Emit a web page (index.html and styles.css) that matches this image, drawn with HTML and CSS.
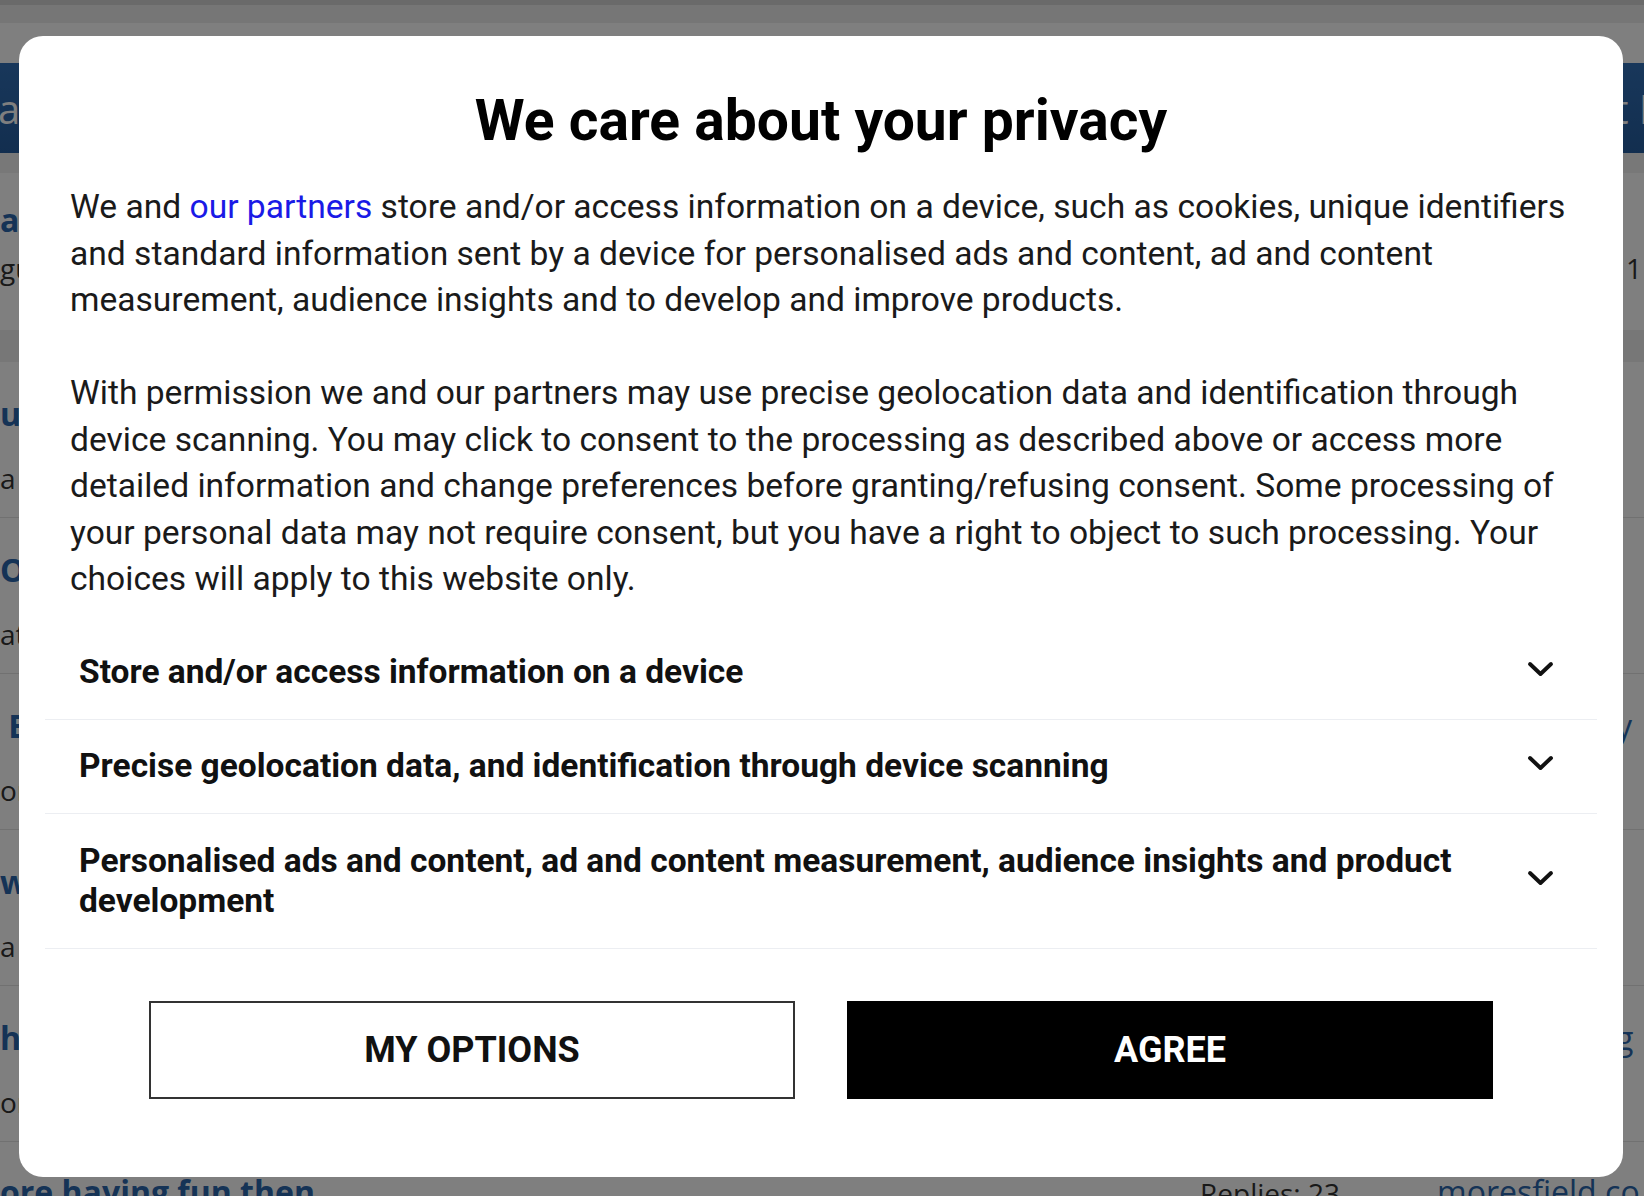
FILE: index.html
```html
<!DOCTYPE html>
<html lang="en">
<head>
<meta charset="utf-8">
<title>We care about your privacy</title>
<link rel="stylesheet" href="styles.css">
</head>
<body>
<div class="page" aria-hidden="true">
  <div class="topbar"></div>
  <header class="site-header">
    <span class="brand">ar Forums</span>
    <span class="nav">Chat I</span>
  </header>
  <div class="subbar"></div>
  <div class="thread thread-first">
    <div class="thread-main">
      <div class="thread-title">awesome threads</div>
      <div class="thread-meta">guests welcome</div>
    </div>
    <div class="thread-side"><div class="side-blank"></div><div class="side-meta">1</div></div>
  </div>
  <div class="section-bar"></div>
  <div class="thread">
    <div class="thread-main">
      <div class="thread-title">update on the match</div>
      <div class="thread-meta">a new thread</div>
    </div>
  </div>
  <div class="thread">
    <div class="thread-main">
      <div class="thread-title">Old friends</div>
      <div class="thread-meta">at the ground</div>
    </div>
  </div>
  <div class="thread">
    <div class="thread-main">
      <div class="thread-title">&nbsp;Big day</div>
      <div class="thread-meta">on the way</div>
    </div>
    <div class="thread-side"><div class="side-title">y</div></div>
  </div>
  <div class="thread">
    <div class="thread-main">
      <div class="thread-title">what a season</div>
      <div class="thread-meta">a long one</div>
    </div>
  </div>
  <div class="thread">
    <div class="thread-main">
      <div class="thread-title">hi all</div>
      <div class="thread-meta">on the road</div>
    </div>
    <div class="thread-side"><div class="side-title">g</div></div>
  </div>
  <div class="thread-last">
    <span class="last-title">ore having fun then</span>
    <span class="last-replies">Replies: 23</span>
    <span class="last-user">moresfield.co</span>
  </div>
</div>

<div class="overlay">
  <div class="modal" role="dialog" aria-labelledby="consent-title">
    <h1 class="title" id="consent-title">We care about your privacy</h1>
    <p class="text">We and <a class="link" href="#">our partners</a> store and/or access information on a device, such as cookies, unique identifiers and standard information sent by a device for personalised ads and content, ad and content measurement, audience insights and to develop and improve products.</p>
    <p class="text">With permission we and our partners may use precise geolocation data and identification through device scanning. You may click to consent to the processing as described above or access more detailed information and change preferences before granting/refusing consent. Some processing of your personal data may not require consent, but you have a right to object to such processing. Your choices will apply to this website only.</p>
    <ul class="purposes">
      <li class="purpose">
        <span class="purpose-label">Store and/or access information on a device</span>
        <svg class="chevron" viewBox="0 0 27 16" aria-hidden="true"><path d="M3 3 L13.5 13 L24 3"/></svg>
      </li>
      <li class="purpose">
        <span class="purpose-label">Precise geolocation data, and identification through device scanning</span>
        <svg class="chevron" viewBox="0 0 27 16" aria-hidden="true"><path d="M3 3 L13.5 13 L24 3"/></svg>
      </li>
      <li class="purpose">
        <span class="purpose-label">Personalised ads and content, ad and content measurement, audience insights and product development</span>
        <svg class="chevron" viewBox="0 0 27 16" aria-hidden="true"><path d="M3 3 L13.5 13 L24 3"/></svg>
      </li>
    </ul>
    <div class="actions">
      <button class="btn btn-outline" type="button">My options</button>
      <button class="btn btn-solid" type="button">Agree</button>
    </div>
  </div>
</div>
</body>
</html>
```

FILE: styles.css
```css
* { box-sizing: border-box; }

html, body {
  margin: 0;
  padding: 0;
}

body {
  width: 1644px;
  height: 1196px;
  overflow: hidden;
  position: relative;
  background: #ffffff;
  font-family: Roboto, "Noto Sans", Arial, sans-serif;
}

/* ---------- page behind the dialog ---------- */
.page {
  font-family: "Open Sans", "Noto Sans", sans-serif;
  color: #333;
}

.topbar {
  height: 23px;
  background: #ececec;
  border-top: 5px solid #d4d4d4;
}

.site-header {
  margin-top: 40px;
  height: 90px;
  background: linear-gradient(#316fb6, #255d9f);
  color: #ffffff;
  display: flex;
  justify-content: space-between;
  align-items: center;
  font-size: 40px;
  white-space: nowrap;
  overflow: hidden;
}

.brand { margin-left: -2px; }
.nav { margin-right: -6px; }

.subbar {
  height: 20px;
  background: #f1f1f1;
}

.section-bar {
  height: 32px;
  background: #eeeeee;
}

.thread {
  display: flex;
  justify-content: space-between;
  height: 156px;
  padding-top: 32px;
  border-bottom: 1px solid #e2e2e2;
  white-space: nowrap;
}

.thread-first {
  height: 157px;
  padding-top: 27px;
  border-bottom: 0;
}

.thread-title {
  font-size: 32px;
  font-weight: 700;
  line-height: 40px;
  color: #2a66ad;
}

.thread-meta {
  margin-top: 24px;
  font-size: 28px;
  line-height: 40px;
  color: #333;
}

.thread-first .thread-meta { margin-top: 8px; }

.thread-side {
  width: 22px;
  overflow: hidden;
}

.side-blank { height: 48px; }

.side-title {
  font-size: 32px;
  line-height: 40px;
  color: #2a66ad;
  margin-left: -6px;
}

.side-meta {
  font-size: 28px;
  line-height: 40px;
  color: #333;
  margin-left: 4px;
}

.thread-last {
  display: flex;
  align-items: baseline;
  padding-top: 28px;
  white-space: nowrap;
}

.last-title {
  width: 1200px;
  font-size: 32px;
  font-weight: 700;
  color: #2a66ad;
}

.last-replies {
  width: 237px;
  font-size: 28px;
  color: #333;
}

.last-user {
  font-size: 32px;
  color: #2a66ad;
}

/* ---------- overlay and dialog ---------- */
.overlay {
  position: absolute;
  inset: 0;
  background: rgba(0, 0, 0, 0.5);
  padding: 36px 21px 0 19px;
}

.modal {
  width: 1604px;
  background: #ffffff;
  border-radius: 24px;
  padding: 51px 51px 78px;
  color: #1a1a1a;
}

.title {
  margin: 0 0 29px;
  font-size: 57px;
  line-height: 68px;
  font-weight: 700;
  text-align: center;
  color: #000000;
}

.text {
  margin: 0 -4px 0 0;
  font-size: 33.6px;
  line-height: 46.5px;
  color: #1a1a1a;
}

.text + .text { margin-top: 46.5px; }

.link {
  color: #1a1ae6;
  text-decoration: none;
}

.purposes {
  list-style: none;
  margin: 22.5px -25px 0;
  padding: 0;
}

.purpose {
  display: flex;
  align-items: center;
  justify-content: space-between;
  gap: 60px;
  padding: 26.5px 43px 26.5px 34px;
  border-bottom: 1px solid #eceef2;
  font-size: 33.5px;
  font-weight: 700;
  line-height: 40.5px;
  color: #111111;
}

.purpose-label { flex: 1; }

.chevron {
  flex: none;
  width: 27px;
  height: 16px;
  margin-top: -6px;
  fill: none;
  stroke: #111111;
  stroke-width: 3.9;
  stroke-linecap: round;
  stroke-linejoin: round;
}

.actions {
  display: flex;
  justify-content: center;
  gap: 52px;
  margin-top: 52px;
}

.btn {
  width: 646px;
  height: 98px;
  font-family: Roboto, "Noto Sans", Arial, sans-serif;
  font-size: 36px;
  font-weight: 700;
  text-transform: uppercase;
  cursor: pointer;
}

.btn-outline {
  background: #ffffff;
  border: 2px solid #333333;
  color: #111111;
}

.btn-solid {
  background: #000000;
  border: 2px solid #000000;
  color: #ffffff;
}
```
